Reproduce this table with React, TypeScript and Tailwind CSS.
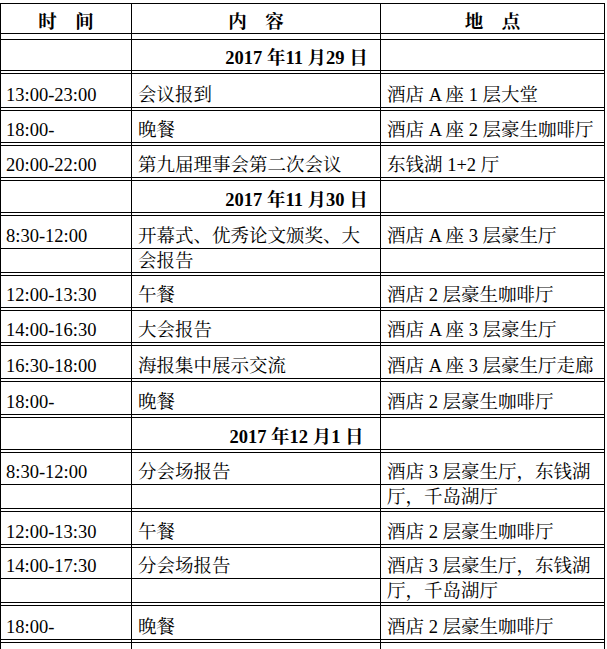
import React from "react";

type Sub = { h: string; cells: [string, string, string]; pb: string };
type Group =
  | { kind: "header"; h: string; gap: string }
  | { kind: "date"; h: string; text: string; gap: string }
  | { kind: "rows"; subs: Sub[]; gap: string };

const groups: Group[] = [
  { kind: "header", h: "h-[29px]", gap: "h-[5px]" },
  { kind: "date", h: "h-[30px]", text: "2017 年11 月29 日", gap: "h-[2px]" },
  { kind: "rows", gap: "h-[2px]", subs: [{ h: "h-[33px]", pb: "pb-[2px]", cells: ["13:00-23:00", "会议报到", "酒店 A 座 1 层大堂"] }] },
  { kind: "rows", gap: "h-[2px]", subs: [{ h: "h-[31px]", pb: "pb-[2px]", cells: ["18:00-", "晚餐", "酒店 A 座 2 层豪生咖啡厅"] }] },
  { kind: "rows", gap: "h-[2px]", subs: [{ h: "h-[31px]", pb: "pb-[2px]", cells: ["20:00-22:00", "第九届理事会第二次会议", "东钱湖 1+2 厅"] }] },
  { kind: "date", h: "h-[31px]", text: "2017 年11 月30 日", gap: "h-[2px]" },
  {
    kind: "rows",
    gap: "h-[2px]",
    subs: [
      { h: "h-[32px]", pb: "pb-[2px]", cells: ["8:30-12:00", "开幕式、优秀论文颁奖、大", "酒店 A 座 3 层豪生厅"] },
      { h: "h-[24px]", pb: "pb-[1px]", cells: ["", "会报告", ""] },
    ],
  },
  { kind: "rows", gap: "h-[2px]", subs: [{ h: "h-[31px]", pb: "pb-[2px]", cells: ["12:00-13:30", "午餐", "酒店 2 层豪生咖啡厅"] }] },
  { kind: "rows", gap: "h-[2px]", subs: [{ h: "h-[31px]", pb: "pb-[2px]", cells: ["14:00-16:30", "大会报告", "酒店 A 座 3 层豪生厅"] }] },
  { kind: "rows", gap: "h-[2px]", subs: [{ h: "h-[32px]", pb: "pb-[2px]", cells: ["16:30-18:00", "海报集中展示交流", "酒店 A 座 3 层豪生厅走廊"] }] },
  { kind: "rows", gap: "h-[2px]", subs: [{ h: "h-[32px]", pb: "pb-[2px]", cells: ["18:00-", "晚餐", "酒店 2 层豪生咖啡厅"] }] },
  { kind: "date", h: "h-[31px]", text: "2017 年12 月1 日", gap: "h-[2px]" },
  {
    kind: "rows",
    gap: "h-[2px]",
    subs: [
      { h: "h-[31px]", pb: "pb-[2px]", cells: ["8:30-12:00", "分会场报告", "酒店 3 层豪生厅，东钱湖"] },
      { h: "h-[24px]", pb: "pb-[1px]", cells: ["", "", "厅，千岛湖厅"] },
    ],
  },
  { kind: "rows", gap: "h-[2px]", subs: [{ h: "h-[32px]", pb: "pb-[2px]", cells: ["12:00-13:30", "午餐", "酒店 2 层豪生咖啡厅"] }] },
  {
    kind: "rows",
    gap: "h-[2px]",
    subs: [
      { h: "h-[30px]", pb: "pb-[2px]", cells: ["14:00-17:30", "分会场报告", "酒店 3 层豪生厅，东钱湖"] },
      { h: "h-[24px]", pb: "pb-[1px]", cells: ["", "", "厅，千岛湖厅"] },
    ],
  },
  { kind: "rows", gap: "h-[2px]", subs: [{ h: "h-[33px]", pb: "pb-[2px]", cells: ["18:00-", "晚餐", "酒店 2 层豪生咖啡厅"] }] },
];

const GRID = "grid grid-cols-[131px_249px_224px]";
const CELL = "border-r border-black flex items-end whitespace-nowrap";

function Spacer({ h }: { h: string }) {
  return (
    <div className={`${GRID} ${h}`}>
      <div className="border-r border-black" />
      <div className="border-r border-black" />
      <div className="border-r border-black" />
    </div>
  );
}

export default function App() {
  return (
    <div className="bg-white w-[607px] h-[649px] overflow-hidden pt-[3px] text-black text-[18.5px] leading-[20px] font-[family-name:'Liberation_Serif','Noto_Serif_CJK_SC','Noto_Sans_CJK_SC',serif]">
      <div className="w-[605px] border-l border-black">
        {groups.map((g, gi) => (
          <React.Fragment key={gi}>
            <div className="border-y border-black">
              {g.kind === "header" && (
                <div className={`${GRID} ${g.h} font-bold`}>
                  <div className={`${CELL} justify-center pb-[1px]`}>时　间</div>
                  <div className={`${CELL} justify-center pb-[1px]`}>内　容</div>
                  <div className={`${CELL} justify-center pb-[1px]`}>地　点</div>
                </div>
              )}
              {g.kind === "date" && (
                <div className={`${GRID} ${g.h} font-bold`}>
                  <div className={CELL} />
                  <div className={`${CELL} justify-center pl-[81px] pb-[2px]`}>{g.text}</div>
                  <div className={CELL} />
                </div>
              )}
              {g.kind === "rows" &&
                g.subs.map((s, si) => (
                  <div key={si} className={`${GRID} ${s.h} ${si > 0 ? "border-t border-black" : ""}`}>
                    <div className={`${CELL} pl-[5px] ${s.pb}`}>{s.cells[0]}</div>
                    <div className={`${CELL} pl-[6px] ${s.pb}`}>{s.cells[1]}</div>
                    <div className={`${CELL} pl-[6px] ${s.pb}`}>{s.cells[2]}</div>
                  </div>
                ))}
            </div>
            <Spacer h={g.gap} />
          </React.Fragment>
        ))}
        <div className="border-t border-black">
          <Spacer h="h-[10px]" />
        </div>
      </div>
    </div>
  );
}
